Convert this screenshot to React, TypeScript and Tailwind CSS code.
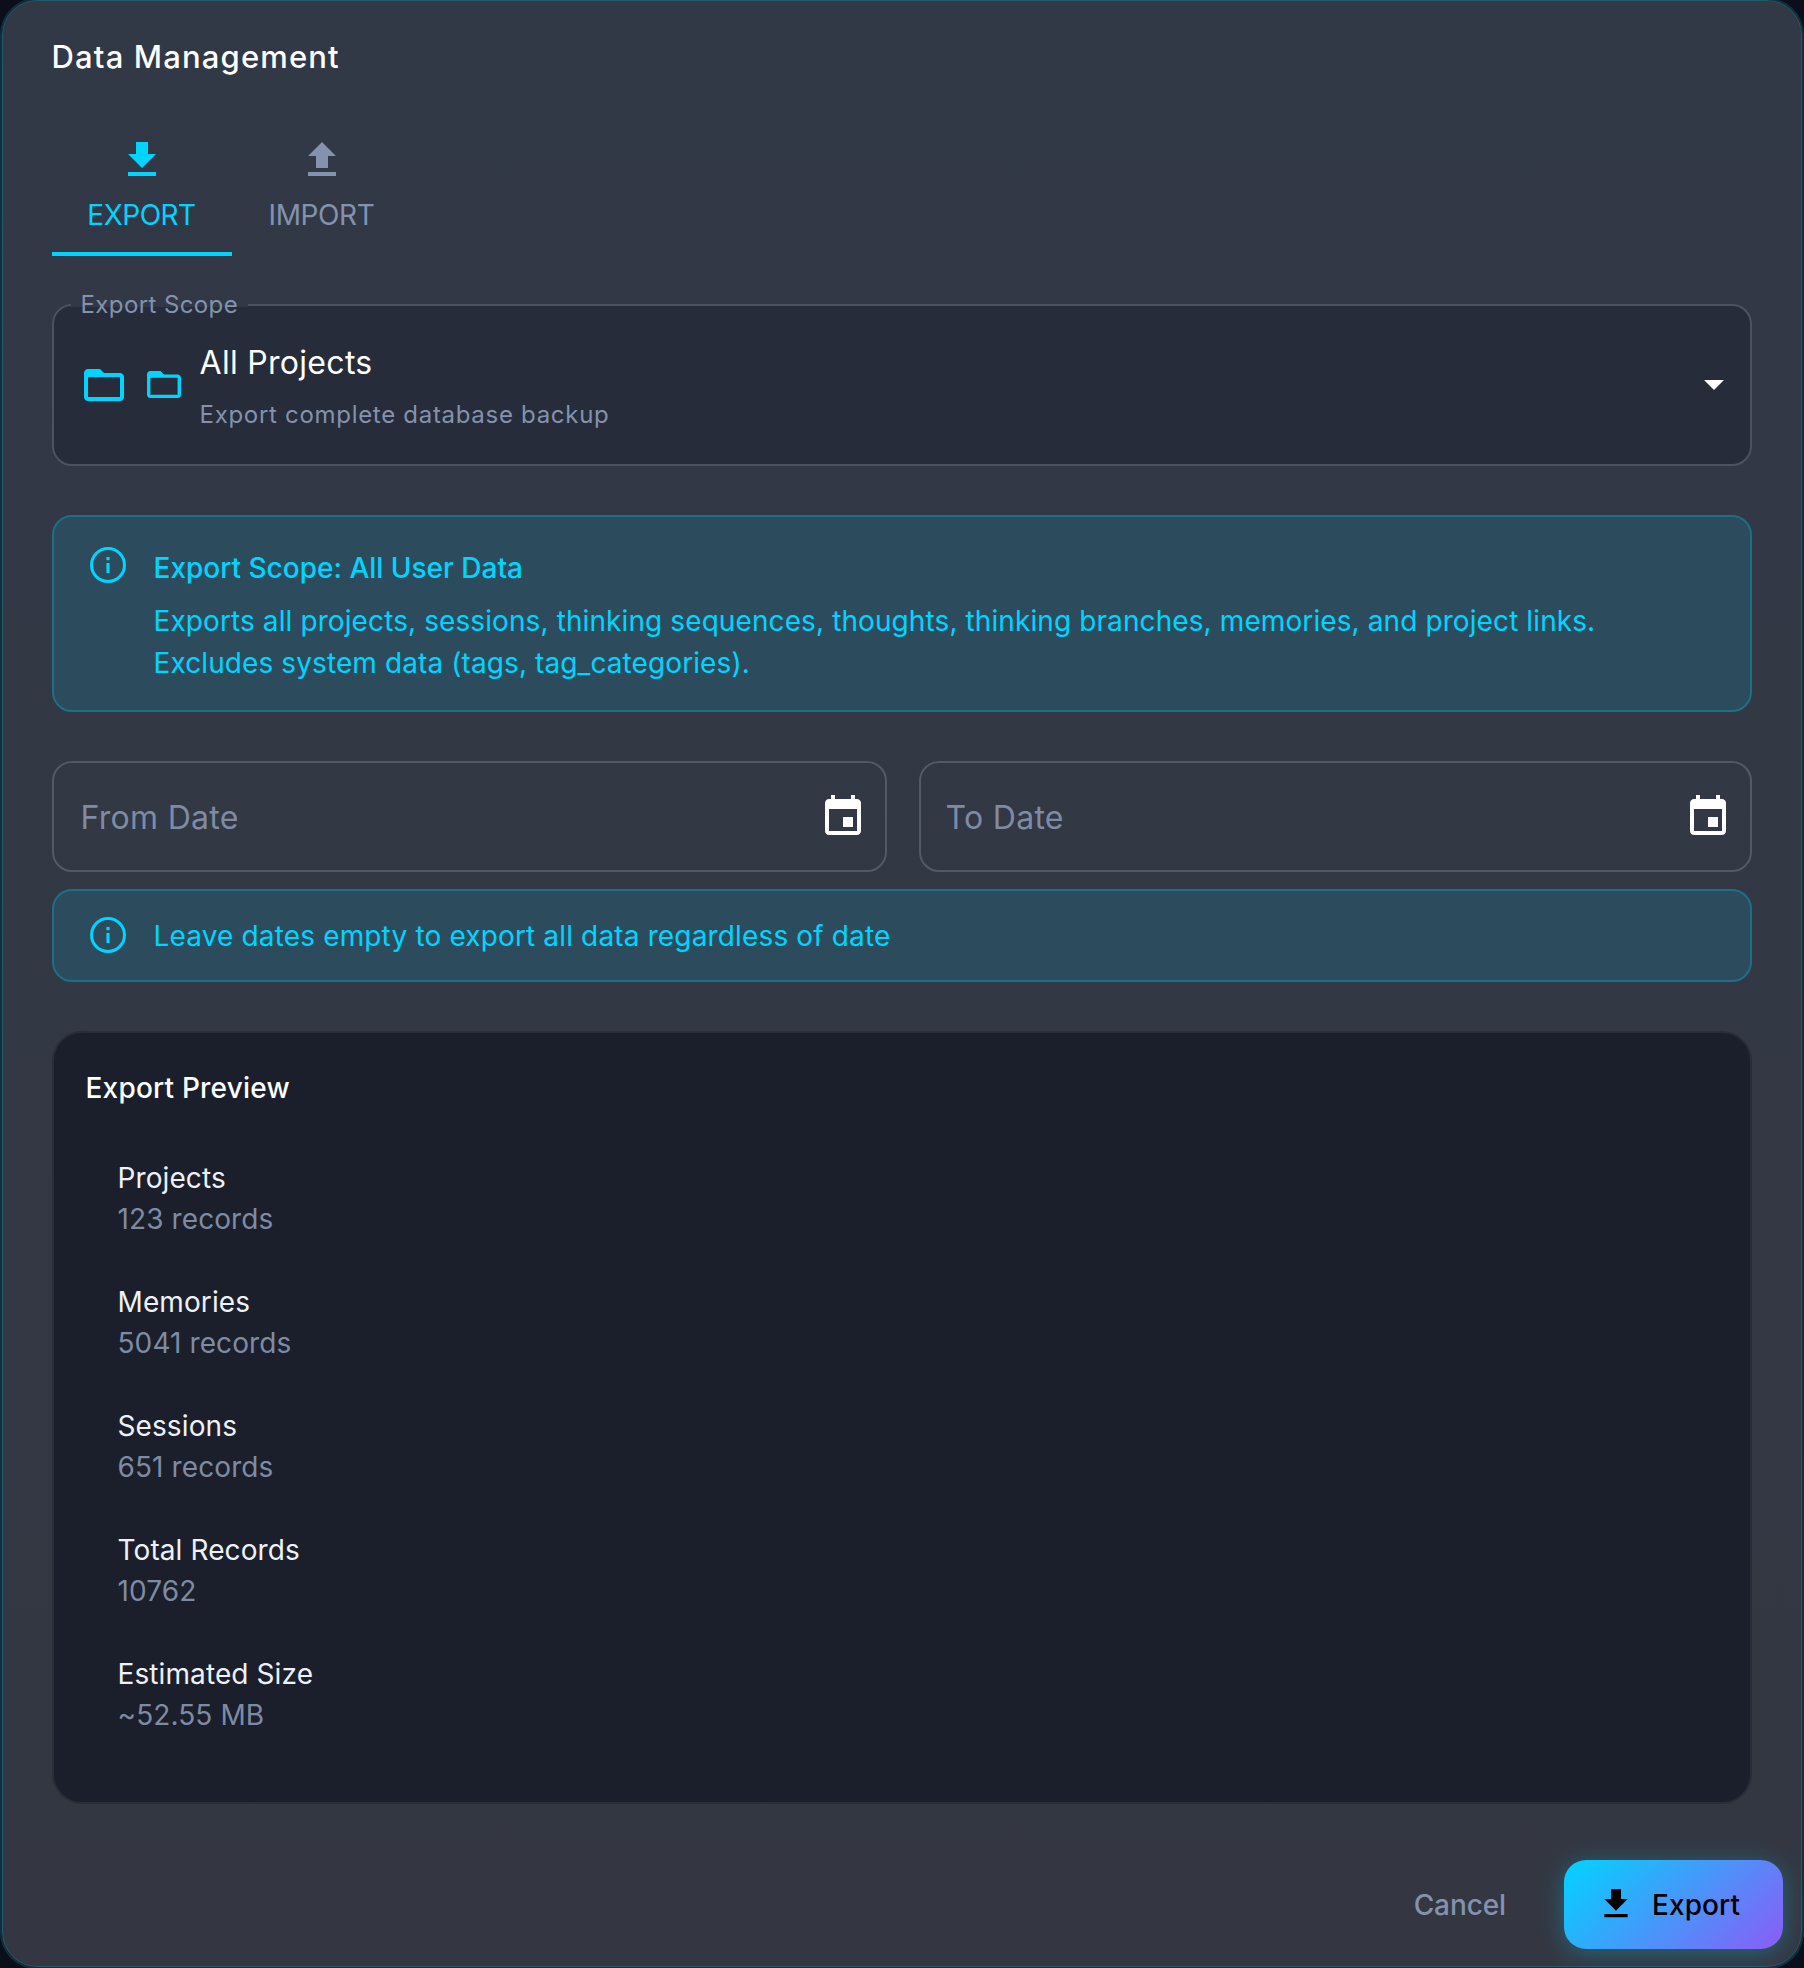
import React from "react";

function Info({ size = 38 }: { size?: number }) {
  return (
    <svg width={size} height={size} viewBox="0 0 38 38" fill="none" className="shrink-0">
      <circle cx="19" cy="19" r="16.5" stroke="#00d4ff" strokeWidth="3" />
      <rect x="17.4" y="17" width="3.2" height="10" fill="#00d4ff" />
      <rect x="17.4" y="11" width="3.2" height="3.2" fill="#00d4ff" />
    </svg>
  );
}

function Folder({ w, h }: { w: number; h: number }) {
  return (
    <svg width={w} height={h} viewBox="2 4 20 16" preserveAspectRatio="none" fill="#00d4ff" className="shrink-0">
      <path d="M20 6h-8l-2-2H4c-1.1 0-1.99.9-1.99 2L2 18c0 1.1.9 2 2 2h16c1.1 0 2-.9 2-2V8c0-1.1-.9-2-2-2zm0 12H4V8h16v10z" />
    </svg>
  );
}

function Cal() {
  return (
    <svg width="48" height="48" viewBox="0 0 24 24" fill="#fff" className="shrink-0">
      <path d="M17 12h-5v5h5v-5zM16 1v2H8V1H6v2H5c-1.11 0-1.99.9-1.99 2L3 19c0 1.1.89 2 2 2h14c1.1 0 2-.9 2-2V5c0-1.1-.9-2-2-2h-1V1h-2zm3 18H5V8h14v11z" />
    </svg>
  );
}

function Down({ size, color }: { size: number; color: string }) {
  return (
    <svg width={size} height={size} viewBox="0 0 24 24" fill={color} className="shrink-0">
      <path d="M19 9h-4V3H9v6H5l7 7 7-7zM5 18v2h14v-2H5z" />
    </svg>
  );
}

function Up({ size, color }: { size: number; color: string }) {
  return (
    <svg width={size} height={size} viewBox="0 0 24 24" fill={color} className="shrink-0">
      <path d="M9 16h6v-6h4l-7-7-7 7h4zm-4 2h14v2H5z" />
    </svg>
  );
}

const rows = [
  ["Projects", "123 records"],
  ["Memories", "5041 records"],
  ["Sessions", "651 records"],
  ["Total Records", "10762"],
  ["Estimated Size", "~52.55 MB"],
];

export default function App() {
  return (
    <div className="h-[1968px] w-[1804px] overflow-hidden bg-[#0a0f1b] [font-family:Inter,'Liberation_Sans',sans-serif]">
      <div className="ml-[2px] flex h-[1966.5px] w-[1800px] flex-col rounded-[35px] border-[1.5px] border-[#235a6a] bg-[linear-gradient(180deg,#313846,#343742)] pr-[49.5px] pl-[48.5px] shadow-[0_0_0_2px_#12303c]">
        <h2 className="mt-[34.5px] h-[42px] text-[31px] leading-[42px] font-medium tracking-[1.15px] text-white">Data Management</h2>

        <div className="mt-[58px] flex h-[120px]">
          <div className="flex h-[120px] w-[180px] flex-col items-center border-b-4 border-[#00d4ff]">
            <Down size={48} color="#00d4ff" />
            <span className="mt-[13px] text-[28px] leading-[36px] tracking-[-0.5px] text-[#00d4ff]">EXPORT</span>
          </div>
          <div className="flex h-[120px] w-[180px] flex-col items-center">
            <Up size={48} color="#8492ad" />
            <span className="mt-[13px] text-[28px] leading-[36px] tracking-[-0.4px] text-[#8492ad]">IMPORT</span>
          </div>
        </div>

        <div className="relative mt-[48px] flex h-[162px] items-center rounded-[20px] border-2 border-[#4d5260] bg-[#262c3a] pr-[26px] pl-[30px]">
          <span className="absolute top-[-16px] left-[17px] px-[10px] text-[24px] leading-[30px] tracking-[0.4px] text-[#8492ad]">
            <span className="absolute inset-x-0 top-[13px] h-[4px] bg-[#323845]" />
            <span className="relative">Export Scope</span>
          </span>
          <Folder w={40} h={32} />
          <span className="ml-[23px] flex"><Folder w={34} h={27} /></span>
          <div className="mt-[5px] ml-[19px] flex flex-1 flex-col">
            <span className="text-[32px] leading-[44px] tracking-[0.3px] text-white">All Projects</span>
            <span className="mt-[12px] text-[24px] leading-[36px] tracking-[0.7px] text-[#8492ad]">Export complete database backup</span>
          </div>
          <div className="h-0 w-0 border-x-[10px] border-t-[10px] border-x-transparent border-t-white" />
        </div>

        <div className="mt-[49px] flex h-[197.5px] gap-[27px] rounded-[20px] border-2 border-[#1d6f87] bg-[#2c4c5e] pt-[29px] pl-[35px]">
          <Info />
          <div className="flex flex-col">
            <div className="mt-[2.5px] text-[28px] leading-[40px] font-medium text-[#00d4ff]">Export Scope: All User Data</div>
            <div className="mt-[12px] text-[28px] leading-[42px] tracking-[0.1px] text-[#00d4ff]">
              Exports all projects, sessions, thinking sequences, thoughts, thinking branches, memories, and project links.
              <br />
              Excludes system data (tags, tag_categories).
            </div>
          </div>
        </div>

        <div className="mt-[49px] flex gap-[32px]">
          <div className="flex h-[111px] flex-1 items-center justify-between rounded-[20px] border-2 border-[#555964] pr-[18px] pl-[27px]">
            <span className="pt-[2px] text-[32px] tracking-[0.3px] text-[#7f8ba3]">From Date</span>
            <Cal />
          </div>
          <div className="flex h-[111px] flex-1 items-center justify-between rounded-[20px] border-2 border-[#555964] pr-[18px] pl-[25px]">
            <span className="pt-[2px] text-[32px] tracking-[0.3px] text-[#7f8ba3]">To Date</span>
            <Cal />
          </div>
        </div>

        <div className="mt-[16.5px] flex h-[93px] items-center gap-[27px] rounded-[20px] border-2 border-[#1d6f87] bg-[#2c4c5e] pl-[35px]">
          <Info />
          <span className="pt-[2px] text-[28px] tracking-[0.15px] text-[#00d4ff]">Leave dates empty to export all data regardless of date</span>
        </div>

        <div className="mt-[49px] h-[773px] rounded-[30px] border-2 border-[#282d38] bg-[#1a1f2b] pt-[35px] pl-[32px]">
          <div className="text-[28px] leading-[40px] font-medium tracking-[0.2px] text-white">Export Preview</div>
          <div className="mt-[50px] flex flex-col gap-[41px] pl-[32px]">
            {rows.map(([a, b]) => (
              <div key={a} className="flex flex-col">
                <span className="text-[28px] leading-[41.5px] tracking-[0.1px] text-[#eef1f5]">{a}</span>
                <span className="text-[28px] leading-[41.5px] tracking-[0.1px] text-[#7f8ba3]">{b}</span>
              </div>
            ))}
          </div>
        </div>

        <div className="mt-[56px] flex items-center justify-end gap-[58px]">
          <span className="pt-[2px] text-[28px] font-medium tracking-[-0.1px] text-[#8492ad]">Cancel</span>
          <div className="-mr-[31.5px] flex h-[89px] w-[219px] items-center gap-[16px] rounded-[22px] bg-[linear-gradient(135deg,#00d4ff,#8b5cf6)] pl-[32px] text-[28px] font-medium tracking-[0.1px] text-black shadow-[0_4px_24px_rgba(0,212,255,0.3)]">
            <Down size={40} color="#000" />
            <span className="pt-[2px]">Export</span>
          </div>
        </div>
      </div>
    </div>
  );
}
